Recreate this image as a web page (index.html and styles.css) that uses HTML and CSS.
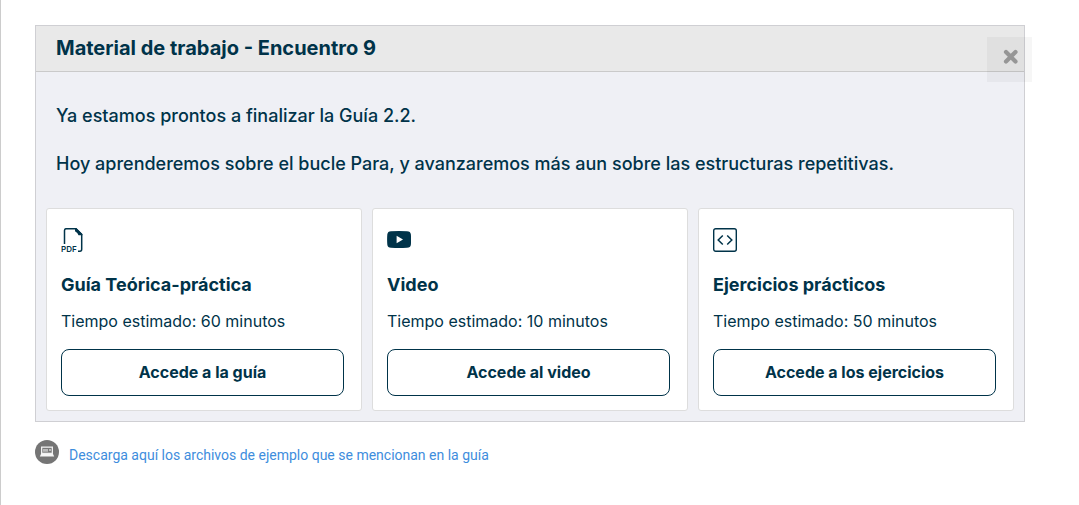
FILE: index.html
```html
<!DOCTYPE html>
<html lang="es">
<head>
<meta charset="utf-8">
<title>Material de trabajo - Encuentro 9</title>
<link rel="stylesheet" href="styles.css">
</head>
<body>
<main class="page">
  <section class="panel">
    <header class="panel-header">
      <h1 class="panel-title">Material de trabajo - Encuentro 9</h1>
      <button class="close" type="button" aria-label="Cerrar">
        <svg width="16" height="16" viewBox="0 0 16 16" aria-hidden="true"><path d="M3 3 12.500 12.500M12.500 3 3 12.500" stroke="#969696" stroke-width="4.200" stroke-linecap="round"/></svg>
      </button>
    </header>
    <div class="intro">
      <p>Ya estamos prontos a finalizar la Guía 2.2.</p>
      <p>Hoy aprenderemos sobre el bucle Para, y avanzaremos más aun sobre las estructuras repetitivas.</p>
    </div>
    <div class="cards">
      <article class="card">
        <svg class="icon" viewBox="0 0 24 24" aria-hidden="true">
          <path d="M3.500 16V2.500Q3.500.700 5.300.700H15L20.700 6.500V21.200Q20.700 23.200 18.900 23.200H17" fill="none" stroke="#003349" stroke-width="1.500"/>
          <path d="M14 .200H15.500L21.400 6V7.300H17.500Q16.800 4.500 14 3.200Z" fill="#003349"/>
          <text class="pdf" x="0" y="23.500">PDF</text>
        </svg>
        <h2 class="card-title">Guía Teórica-práctica</h2>
        <p class="card-time">Tiempo estimado: 60 minutos</p>
        <button class="card-button" type="button">Accede a la guía</button>
      </article>
      <article class="card">
        <svg class="icon" viewBox="0 0 24 24" aria-hidden="true">
          <path d="M4 3.200Q12 2.600 20 3.200Q23.600 3.300 23.900 6.500Q24.300 11.500 23.900 16.500Q23.600 19.700 20 19.800Q12 20.400 4 19.800Q.600 19.700.300 16.500Q-.100 11.500.300 6.500Q.600 3.300 4 3.200Z" fill="#003349"/>
          <path d="M9.600 7.800 16 11.500 9.600 15.200Z" fill="#fff"/>
        </svg>
        <h2 class="card-title">Video</h2>
        <p class="card-time">Tiempo estimado: 10 minutos</p>
        <button class="card-button" type="button">Accede al video</button>
      </article>
      <article class="card">
        <svg class="icon" viewBox="0 0 24 24" aria-hidden="true">
          <rect x=".700" y=".700" width="22.600" height="22.600" rx="2" fill="none" stroke="#003349" stroke-width="1.400"/>
          <path d="M9.800 7.500 5.200 12 9.800 16.500M14.200 7.500 18.800 12 14.200 16.500" fill="none" stroke="#003349" stroke-width="1.500"/>
        </svg>
        <h2 class="card-title">Ejercicios prácticos</h2>
        <p class="card-time">Tiempo estimado: 50 minutos</p>
        <button class="card-button" type="button">Accede a los ejercicios</button>
      </article>
    </div>
  </section>
  <div class="download">
    <svg width="24" height="24" viewBox="0 0 24 24" aria-hidden="true">
      <circle cx="12" cy="12" r="12" fill="#757575"/>
      <path d="M6 6.500H18V14H6Z" fill="#f0f0f0"/>
      <path d="M7.300 7.800H16.700V12.700H7.300Z" fill="#777"/>
      <path d="M8 9H13V11.700H8ZM14 9H16V11H14Z" fill="#bbb"/>
      <path d="M6 14H18L19.200 16.500H4.800Z" fill="#f6f6f6"/>
    </svg>
    <a class="download-link" href="#archivos">Descarga aquí los archivos de ejemplo que se mencionan en la guía</a>
  </div>
</main>
</body>
</html>
```
FILE: styles.css
```css
* {
  box-sizing: border-box;
}

body {
  margin: 0;
  background: #fff;
  color: #003349;
  font-family: Inter, "Liberation Sans", sans-serif;
}

h1, h2, p {
  margin: 0;
}

.page {
  min-height: 100vh;
  padding: 25px 54px 25px 34px;
  border-left: 1px solid #ccc;
}

.panel {
  border: 1px solid #cfcfd3;
  background: #eff0f5;
}

.panel-header {
  position: relative;
  padding: 8px 20px 9px;
  border-bottom: 1px solid #cacaca;
  background: #e9e9e9;
}

.panel-title {
  font-size: 20px;
  font-weight: 700;
  line-height: 28px;
}

.close {
  position: absolute;
  top: 11px;
  right: -8px;
  width: 45px;
  height: 45px;
  padding: 0 0 6px 2px;
  border: 0;
  background: rgba(0, 0, 0, 0.035);
  cursor: pointer;
}

.close svg {
  display: block;
  margin: 0 auto;
}

.intro {
  display: grid;
  gap: 24px;
  padding: 32px 20px;
  font-size: 18px;
  font-weight: 500;
  line-height: 24px;
}

.cards {
  display: grid;
  grid-template-columns: repeat(3, 1fr);
  gap: 10px;
  padding: 0 10px 10px;
}

.card {
  display: flex;
  flex-direction: column;
  align-items: flex-start;
  padding: 19px 17px 14px 14px;
  border: 1px solid #ddd;
  border-radius: 3px;
  background: #fff;
}

.icon {
  display: block;
  width: 24px;
  height: 24px;
}

.pdf {
  fill: #003349;
  font-size: 8px;
  font-weight: 600;
}

.card-title {
  margin-top: 21px;
  font-size: 18px;
  font-weight: 700;
  line-height: 24px;
}

.card-time {
  margin-top: 12px;
  font-size: 16px;
  font-weight: 400;
  line-height: 24px;
}

.card-button {
  width: 100%;
  margin-top: 16px;
  padding: 11px 16px;
  border: 1px solid #003349;
  border-radius: 8px;
  background: #fff;
  color: inherit;
  font: 700 16px/23px Inter, "Liberation Sans", sans-serif;
  cursor: pointer;
}

.download {
  display: flex;
  gap: 10px;
  margin-top: 18px;
}

.download-link {
  padding-top: 5px;
  color: #3e8ddd;
  font-family: Roboto, "Liberation Sans", sans-serif;
  font-size: 14px;
  line-height: 20px;
  text-decoration: none;
}
```
